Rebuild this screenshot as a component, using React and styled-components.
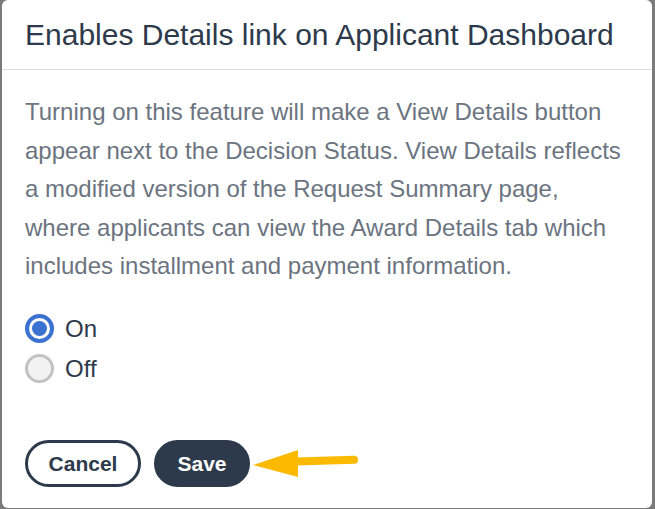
import React from "react";
import styled, { createGlobalStyle } from "styled-components";

const Global = createGlobalStyle`
  html, body { margin: 0; padding: 0; background: #7b7b7b; }
  body { font-family: "Liberation Sans", Arial, sans-serif; overflow: hidden; }
`;

const Modal = styled.div`
  position: relative;
  box-sizing: border-box;
  margin: 0 3px 0 2px;
  height: 508px;
  background: #fff;
  border-radius: 6px;
  display: flex;
  flex-direction: column;
`;

const Header = styled.div`
  height: 69px;
  display: flex;
  align-items: center;
  padding: 0 23px;
  border-bottom: 1px solid #dedede;
`;

const Title = styled.h2`
  margin: 0;
  font-size: 30px;
  font-weight: 400;
  color: #2d3a4b;
  letter-spacing: 0;
`;

const Body = styled.div`
  padding: 23px 23px 0;
  display: flex;
  flex-direction: column;
`;

const Text = styled.p`
  margin: 0;
  font-size: 24px;
  line-height: 38.5px;
  color: #6b7480;
`;

const Options = styled.div`
  margin-top: 28px;
  display: flex;
  flex-direction: column;
  gap: 11px;
`;

const Option = styled.label`
  display: flex;
  align-items: center;
  gap: 11px;
  font-size: 24px;
  line-height: 29px;
  color: #2d3a4b;
`;

const Circle = styled.span`
  box-sizing: border-box;
  width: 29px;
  height: 29px;
  border-radius: 50%;
  display: flex;
  align-items: center;
  justify-content: center;
  border: ${(p) => (p.$on ? "4px solid #3b72d2" : "3px solid #c2c2c2")};
  background: ${(p) => (p.$on ? "#fff" : "#f2f2f2")};
  &::after {
    content: "";
    display: ${(p) => (p.$on ? "block" : "none")};
    width: 15px;
    height: 15px;
    border-radius: 50%;
    background: #3b72d2;
  }
`;

const Footer = styled.div`
  margin-top: 57px;
  padding: 0 23px;
  display: flex;
  gap: 13px;
`;

const Button = styled.button`
  box-sizing: border-box;
  height: 47px;
  padding: 2px 0 0;
  width: ${(p) => p.$w}px;
  border-radius: 24px;
  border: 3px solid #2d3a4b;
  background: ${(p) => (p.$primary ? "#2d3a4b" : "#fff")};
  color: ${(p) => (p.$primary ? "#fff" : "#2d3a4b")};
  font-family: "Liberation Sans", Arial, sans-serif;
  font-weight: 700;
  font-size: 21px;
`;

const Arrow = styled.svg`
  position: absolute;
  left: 248px;
  top: 447px;
`;

export default function App() {
  return (
    <>
      <Global />
      <Modal>
        <Header>
          <Title>Enables Details link on Applicant Dashboard</Title>
        </Header>
        <Body>
          <Text>
            Turning on this feature will make a View Details button appear next to the Decision Status. View Details reflects a modified version of the Request Summary page, where applicants can view the Award Details tab which includes installment and payment information.
          </Text>
          <Options>
            <Option>
              <Circle $on />
              On
            </Option>
            <Option>
              <Circle />
              Off
            </Option>
          </Options>
        </Body>
        <Footer>
          <Button $w={116}>Cancel</Button>
          <Button $w={96} $primary>Save</Button>
        </Footer>
        <Arrow width="115" height="35" viewBox="0 0 115 35">
          <path d="M46 14.5 L104 12.8" stroke="#fbba00" strokeWidth="8" strokeLinecap="round" fill="none" />
          <path d="M3 18 L48 3 L48 30 Z" fill="#fbba00" />
        </Arrow>
      </Modal>
    </>
  );
}
